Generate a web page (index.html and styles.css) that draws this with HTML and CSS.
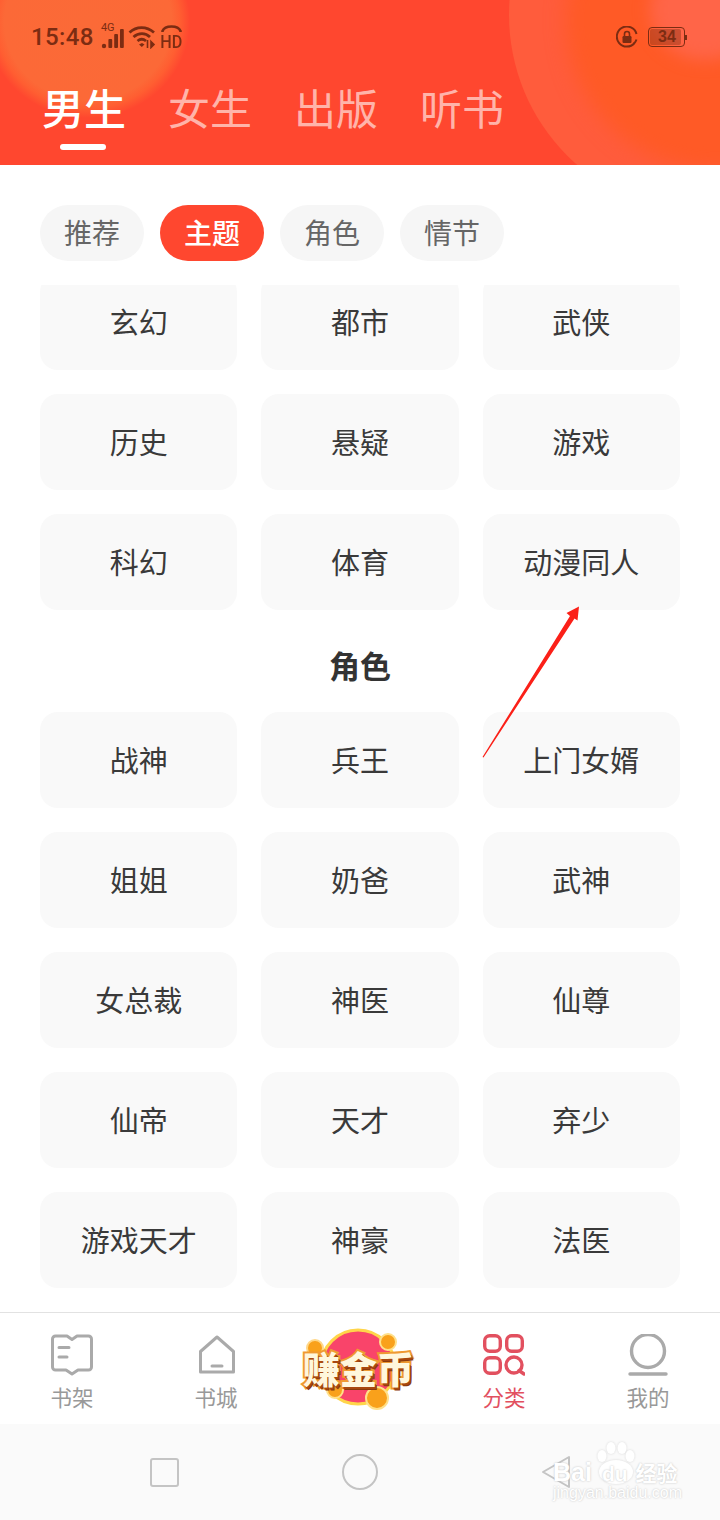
FILE: index.html
```html
<!DOCTYPE html>
<html>
<head>
  <meta charset="UTF-8">
  <title>分类</title>
  <link rel="stylesheet" href="styles.css">
</head>
<body>
  <div class="page">
    <header class="top">
      <div class="blob-left"></div>
      <div class="blob-right"></div>
      <div class="blob-right-inner"></div>
      <div class="blob-corner"></div>

      <div class="status-bar">
        <div class="status-left">
          <span class="clock">15:48</span>
          <span class="signal">
            <span class="signal-label">4G</span>
            <svg width="24" height="28" viewBox="0 0 24 28">
              <circle cx="3" cy="23" r="2.2" fill="#7c2c12"/>
              <rect x="7.4" y="16" width="3.8" height="9" rx="1" fill="#7c2c12"/>
              <rect x="13.2" y="11" width="3.8" height="14" rx="1" fill="#7c2c12"/>
              <rect x="19" y="6" width="3.8" height="19" rx="1" fill="#7c2c12"/>
            </svg>
          </span>
          <svg class="wifi" width="28" height="24" viewBox="0 0 28 24" fill="none" stroke="#7c2c12" stroke-width="2.8">
            <path d="M1.5 7.5C8.5 1 18.5 1 26 7.5"/>
            <path d="M5.5 12C10.5 7.5 17.5 7.5 22 12"/>
            <path d="M9.5 16C12 14 15.5 14 18 16"/>
            <path d="M11 19.5l3-1.6 2.5 1.6-2.7 2.6z" fill="#7c2c12" stroke="none"/>
            <path d="M19.5 15v8M23 16.5l3 3-3 3z" stroke-width="1.6" fill="#7c2c12"/>
          </svg>
          <span class="hd">
            <svg width="21" height="9" viewBox="0 0 21 9" fill="none" stroke="#7c2c12" stroke-width="2.6"><path d="M1.5 8V7C4 1 17 1 19.5 7V8"/></svg>
            <span class="hd-label">HD</span>
          </span>
        </div>
        <div class="status-right">
          <svg width="22" height="22" viewBox="0 0 22 22" fill="none" stroke="#7c2c12" stroke-width="2">
            <path d="M18.5 17A10 10 0 1 1 20.5 8"/>
            <path d="M20.5 13.5A10 10 0 0 1 18 17.5"/>
            <rect x="6.5" y="10" width="9" height="7" rx="1.2" fill="#7c2c12" stroke="none"/>
            <path d="M8.5 10V8a2.5 2.5 0 0 1 5 0v2" stroke-width="1.6"/>
          </svg>
          <div class="battery">
            <div class="battery-fill">34</div>
          </div>
          <span class="battery-nub"></span>
        </div>
      </div>

      <nav class="tabs">
        <span class="tab on">男生</span>
        <span class="tab">女生</span>
        <span class="tab">出版</span>
        <span class="tab">听书</span>
      </nav>
    </header>

    <div class="chips">
      <span class="chip">推荐</span>
      <span class="chip on">主题</span>
      <span class="chip">角色</span>
      <span class="chip">情节</span>
    </div>

    <main class="scroller">
      <div class="grid first">
        <div class="card">玄幻</div>
        <div class="card">都市</div>
        <div class="card">武侠</div>
        <div class="card">历史</div>
        <div class="card">悬疑</div>
        <div class="card">游戏</div>
        <div class="card">科幻</div>
        <div class="card">体育</div>
        <div class="card">动漫同人</div>
      </div>

      <h2 class="section-title">角色</h2>

      <div class="grid">
        <div class="card">战神</div>
        <div class="card">兵王</div>
        <div class="card">上门女婿</div>
        <div class="card">姐姐</div>
        <div class="card">奶爸</div>
        <div class="card">武神</div>
        <div class="card">女总裁</div>
        <div class="card">神医</div>
        <div class="card">仙尊</div>
        <div class="card">仙帝</div>
        <div class="card">天才</div>
        <div class="card">弃少</div>
        <div class="card">游戏天才</div>
        <div class="card">神豪</div>
        <div class="card">法医</div>
      </div>
    </main>

    <footer class="tabbar">
      <div class="bar-item">
        <svg width="42" height="42" viewBox="0 0 42 42" fill="none" stroke="#aaa" stroke-width="3" stroke-linejoin="round" stroke-linecap="round">
          <path d="M4.5 2H16L21 5.5 26 2H37.5A3 3 0 0 1 40.5 5V33A3 3 0 0 1 37.5 36H27L21 40 15 36H4.5A3 3 0 0 1 1.5 33V5A3 3 0 0 1 4.5 2Z"/>
          <path d="M8 13.5H18M8 23H16"/>
        </svg>
        <span>书架</span>
      </div>
      <div class="bar-item">
        <svg width="42" height="42" viewBox="0 0 42 42" fill="none" stroke="#aaa" stroke-width="3" stroke-linejoin="round" stroke-linecap="round">
          <path d="M22 3L5.5 17.5V38H38.5V17.5Z"/>
          <path d="M17 32H27"/>
        </svg>
        <span>书城</span>
      </div>
      <div class="bar-item coin">
        <svg class="coin-art" width="120" height="86" viewBox="0 0 120 86">
          <circle cx="58" cy="41" r="37" fill="#f9446a" stroke="#ffd54a" stroke-width="3"/>
          <circle cx="15" cy="22" r="8" fill="#f9a11b" stroke="#ffd88a" stroke-width="2"/>
          <circle cx="88" cy="16" r="8" fill="#f9a11b" stroke="#ffe08a" stroke-width="2"/>
          <circle cx="35" cy="64" r="8" fill="#f9a11b" stroke="#ffe08a" stroke-width="2"/>
          <circle cx="77" cy="72" r="11" fill="#f9a11b" stroke="#ffe08a" stroke-width="2"/>
        </svg>
        <span class="coin-text">赚金币</span>
      </div>
      <div class="bar-item active">
        <svg width="42" height="42" viewBox="0 0 42 42" fill="none" stroke="#e2505f" stroke-width="3.4" stroke-linecap="round">
          <rect x="1.7" y="1.7" width="15.6" height="15.6" rx="5"/>
          <rect x="23.7" y="1.7" width="15.6" height="15.6" rx="5"/>
          <rect x="1.7" y="23.7" width="15.6" height="15.6" rx="5"/>
          <circle cx="31" cy="31" r="8"/>
          <path d="M36 36.5L41 40"/>
        </svg>
        <span>分类</span>
      </div>
      <div class="bar-item">
        <svg width="42" height="42" viewBox="0 0 42 42" fill="none" stroke="#aaa" stroke-width="3.4" stroke-linecap="round">
          <circle cx="21" cy="17" r="16.5"/>
          <path d="M3 40H39"/>
        </svg>
        <span>我的</span>
      </div>
    </footer>

    <div class="navbar">
      <span class="nav-cell"><span class="nav-square"></span></span>
      <span class="nav-cell"><span class="nav-circle"></span></span>
      <span class="nav-cell">
        <svg width="30" height="34" viewBox="0 0 30 34" fill="none" stroke="#c4c4c4" stroke-width="2" stroke-linejoin="round"><path d="M28 2V32L2 17Z"/></svg>
      </span>
    </div>

    <!-- annotation drawn over the screenshot -->
    <svg class="arrow" width="720" height="1520" viewBox="0 0 720 1520">
      <path d="M482.5 757L570 616 566.5 613 579 606.5 577.5 620.5 574.5 618.5 483.5 757.5Z" fill="#fb2018"/>
    </svg>

    <div class="watermark">
      <svg class="paw" width="40" height="44" viewBox="0 0 40 44" fill="#fff">
        <ellipse cx="6" cy="14" rx="4.5" ry="6"/>
        <ellipse cx="15" cy="6" rx="4.5" ry="6"/>
        <ellipse cx="26" cy="6" rx="4.5" ry="6"/>
        <ellipse cx="34" cy="14" rx="4.5" ry="6"/>
        <ellipse cx="20" cy="30" rx="17" ry="12"/>
      </svg>
      <div class="mark-main">Bai<span class="mark-du">du</span><span class="mark-cn">经验</span></div>
      <div class="mark-url">jingyan.baidu.com</div>
    </div>
  </div>
</body>
</html>
```

FILE: styles.css
```css
* {
  box-sizing: border-box;
}

body {
  margin: 0;
  background-color: #fff;
  font-family: "Noto Sans CJK SC", "Noto Sans", sans-serif;
}

.page {
  position: relative;
  width: 720px;
  height: 1520px;
  display: flex;
  flex-direction: column;
  overflow: hidden;
}

/* header */
.top {
  position: relative;
  height: 165px;
  flex-shrink: 0;
  background-color: #ff472f;
  overflow: hidden;
}

.blob-left {
  position: absolute;
  left: -14px;
  top: -74px;
  width: 204px;
  height: 192px;
  border-radius: 50%;
  background: radial-gradient(closest-side, #fb6a37 0%, #fc6937 82%, rgba(255, 100, 50, 0.8) 90%, rgba(255, 71, 47, 0) 100%);
}

.blob-right {
  position: absolute;
  left: 509px;
  top: -184px;
  width: 398px;
  height: 398px;
  border-radius: 50%;
  background-color: #ff5c3c;
}

.blob-right-inner {
  position: absolute;
  left: 566px;
  top: -130px;
  width: 300px;
  height: 300px;
  border-radius: 50%;
  background-color: #ff5a26;
  filter: blur(10px);
}

.blob-corner {
  position: absolute;
  left: 650px;
  top: -40px;
  width: 110px;
  height: 100px;
  border-radius: 50%;
  background-color: #ff6548;
  filter: blur(8px);
}

.status-bar {
  position: relative;
  height: 71px;
  padding: 3px 33px 0 31px;
  display: flex;
  justify-content: space-between;
  align-items: center;
  color: #7c2c12;
}

.status-left,
.status-right {
  display: flex;
  align-items: center;
}

.clock {
  font-family: Roboto, sans-serif;
  font-size: 24px;
  font-weight: 500;
  letter-spacing: 0.4px;
}

.signal {
  position: relative;
  width: 24px;
  height: 28px;
  margin-left: 7px;
}

.signal svg {
  display: block;
}

.signal-label {
  position: absolute;
  left: 0;
  top: -2px;
  font-family: Roboto, sans-serif;
  font-size: 11px;
  line-height: 14px;
}

.wifi {
  margin-left: 3px;
}

.hd {
  margin-left: 3px;
  display: flex;
  flex-direction: column;
  align-items: center;
}

.hd svg {
  display: block;
}

.hd-label {
  font-family: Roboto, sans-serif;
  font-size: 18px;
  font-weight: 500;
  line-height: 17px;
  transform: scaleX(0.9);
}

.status-right svg {
  display: block;
}

.battery {
  width: 37px;
  height: 20px;
  margin-left: 10px;
  padding: 1px;
  border: 1.5px solid #7c2c12;
  border-radius: 4px;
}

.battery-fill {
  width: 31px;
  height: 100%;
  border-radius: 2px;
  background-color: rgba(124, 44, 18, 0.4);
  font-family: "Liberation Sans", sans-serif;
  font-size: 16px;
  font-weight: bold;
  line-height: 15px;
  text-align: center;
  padding-left: 3px;
}

.battery-nub {
  width: 2px;
  height: 5px;
  background-color: #7c2c12;
}

.tabs {
  position: relative;
  padding-left: 42px;
  display: flex;
  gap: 42px;
}

.tab {
  position: relative;
  font-size: 42px;
  line-height: 72px;
  color: rgba(255, 255, 255, 0.6);
}

.tab.on {
  color: #fff;
  font-weight: 500;
}

.tab.on::after {
  content: "";
  position: absolute;
  left: 18px;
  top: 73px;
  width: 46px;
  height: 6px;
  border-radius: 3px;
  background-color: #fff;
}

/* filter chips */
.chips {
  display: flex;
  gap: 16px;
  padding: 40px 40px 24px;
  flex-shrink: 0;
}

.chip {
  width: 104px;
  height: 56px;
  border-radius: 28px;
  background-color: #f6f6f6;
  color: #666;
  font-size: 28px;
  line-height: 54px;
  text-align: center;
}

.chip.on {
  background-color: #ff472f;
  color: #fff;
  font-weight: 500;
}

/* card grid */
.scroller {
  flex: 1;
  min-height: 0;
  padding: 0 40px;
  overflow: hidden;
}

.grid {
  display: grid;
  grid-template-columns: repeat(3, 1fr);
  gap: 24px;
}

.grid.first {
  margin-top: -11px;
}

.card {
  height: 96px;
  border-radius: 18px;
  background-color: #f9f9f9;
  color: #3a3a3a;
  font-size: 29px;
  line-height: 94px;
  text-align: center;
}

.section-title {
  margin: 0;
  height: 102px;
  color: #333;
  font-size: 31px;
  font-weight: 700;
  line-height: 110px;
  text-align: center;
}

/* bottom bar */
.tabbar {
  height: 112px;
  flex-shrink: 0;
  border-top: 1px solid #e2e2e2;
  background-color: #fff;
  display: grid;
  grid-template-columns: repeat(5, 144px);
}

.bar-item {
  position: relative;
  padding-top: 21px;
  display: flex;
  flex-direction: column;
  align-items: center;
  color: #999;
  font-size: 21.5px;
  line-height: 30px;
}

.bar-item svg {
  display: block;
  margin-bottom: 6px;
}

.bar-item.active {
  color: #e2505f;
}

.bar-item.coin {
  padding-top: 0;
}

.coin-art {
  position: absolute;
  left: 12px;
  top: 13px;
}

.coin-text {
  position: absolute;
  left: 15px;
  top: 31px;
  width: 120px;
  color: #fff7dc;
  font-size: 37px;
  font-weight: 900;
  line-height: 48px;
  white-space: nowrap;
  paint-order: stroke fill;
  -webkit-text-stroke: 4px #ef9a32;
  text-shadow: 1px 2px 0 #a8480f, 2px 3px 0 #8a3a0c;
}

.navbar {
  height: 96px;
  flex-shrink: 0;
  padding: 0 66px;
  background-color: #fafafa;
  display: grid;
  grid-template-columns: repeat(3, 1fr);
}

.nav-cell {
  display: flex;
  justify-content: center;
  align-items: center;
}

.nav-square {
  width: 29px;
  height: 29px;
  border: 2px solid #c4c4c4;
  border-radius: 3px;
}

.nav-circle {
  width: 36px;
  height: 36px;
  border: 2px solid #c4c4c4;
  border-radius: 50%;
}

/* overlays */
.arrow {
  position: absolute;
  left: 0;
  top: 0;
  pointer-events: none;
}

.watermark {
  position: absolute;
  left: 553px;
  top: 1440px;
  width: 140px;
  height: 70px;
  color: #fff;
  text-shadow: 0 0 2px #bdbdbd;
}

.paw {
  position: absolute;
  left: 43px;
  top: 2px;
  filter: drop-shadow(0 0 1px #d8d8d8);
}

.mark-main {
  position: absolute;
  left: 0;
  top: 16px;
  font-family: "Liberation Sans", "Noto Sans CJK SC", sans-serif;
  font-size: 25px;
  font-weight: 700;
  line-height: 32px;
  white-space: nowrap;
}

.mark-du {
  margin-left: 10px;
  font-size: 21px;
}

.mark-cn {
  margin-left: 8px;
  font-size: 21px;
}

.mark-url {
  position: absolute;
  left: 0;
  top: 44px;
  font-family: "Liberation Sans", sans-serif;
  font-size: 16px;
  line-height: 18px;
  white-space: nowrap;
}
```
